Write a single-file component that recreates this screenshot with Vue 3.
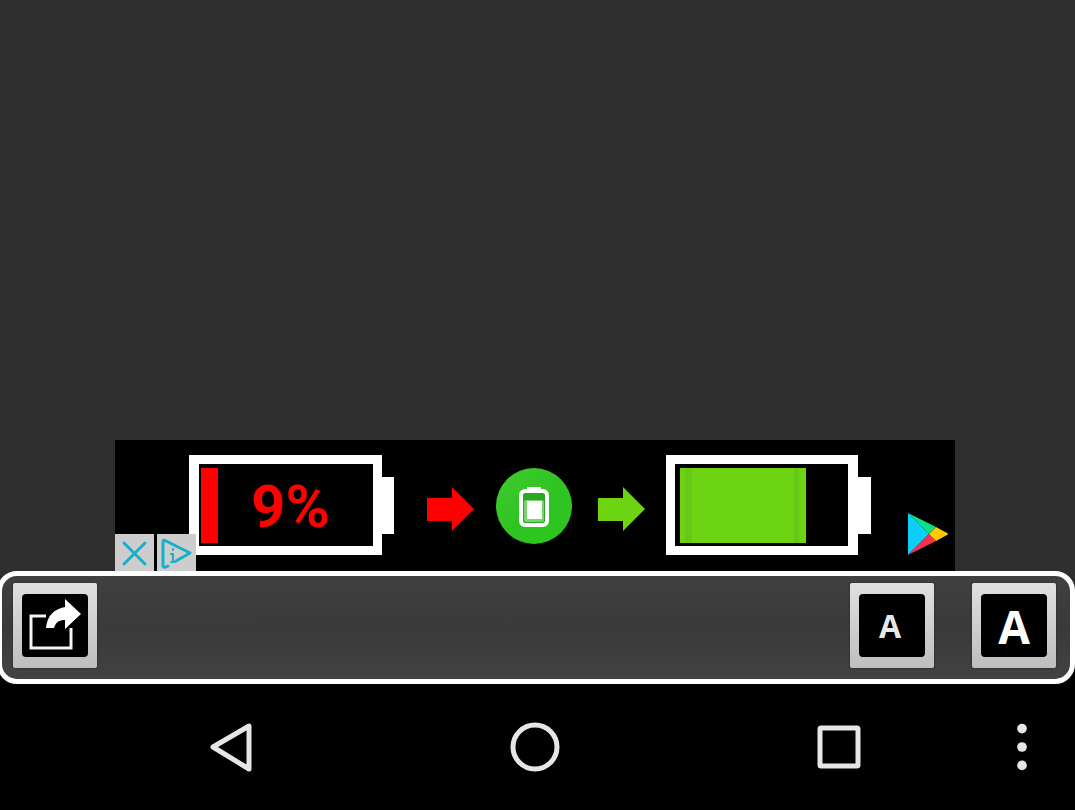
<script setup>
const share = () => {
  if (navigator.share) navigator.share({ title: document.title })
}
</script>

<template>
  <div class="screen">
    <main class="content">
      <section class="ad" aria-label="Advertisement">
        <a class="ad-link" href="#" aria-label="Battery saver on Google Play">
          <svg class="ad-art" viewBox="0 0 840 131">
            <defs>
              <linearGradient id="disc" x1="0" y1="0" x2="1" y2="1">
                <stop offset="0" stop-color="#41cd33" />
                <stop offset="0.5" stop-color="#2fc322" />
                <stop offset="1" stop-color="#2cc81e" />
              </linearGradient>
            </defs>
            <path fill="#fff" fill-rule="evenodd" d="M74 15H267V37H279V94H267V115H74ZM84 24V106H258V24Z" />
            <rect x="86" y="28" width="17" height="75" fill="#fe0000" />
            <text x="136" y="87" class="charge">9%</text>
            <path fill="#fe0000" d="M312 58H337V47L359 69L337 91V81H312Z" />
            <circle cx="419" cy="66" r="38" fill="url(#disc)" />
            <rect x="412" y="47" width="14" height="5" rx="1" fill="#fff" />
            <rect x="406" y="51" width="26" height="34" rx="4" fill="#2aa822" stroke="#fff" stroke-width="4" />
            <rect x="409" y="60" width="20" height="22" rx="2" fill="#78d36f" />
            <rect x="412" y="61" width="15" height="18" fill="#fff" />
            <path fill="#6dd414" d="M483 58H508V47L530 69L508 91V81H483Z" />
            <path fill="#fff" fill-rule="evenodd" d="M551 15H743V37H756V94H743V115H551ZM560 24V106H733V24Z" />
            <rect x="565" y="28" width="126" height="75" fill="#6dd414" />
            <path fill="#66c916" d="M570 28H577V103H570ZM679 28H684V103H679Z" />
            <path fill="#0ccdfb" d="M793 73L814 94L793 115Z" />
            <path fill="#0be184" d="M793 73L821 87L814 94Z" />
            <path fill="#f5334a" d="M793 115L821 101L814 94Z" />
            <path fill="#ffc900" d="M814 94L821 87L832 93Q834 94 832 95L821 101Z" />
          </svg>
        </a>
        <div class="ad-controls">
          <button type="button" class="ad-button" aria-label="Close ad">
            <svg viewBox="0 0 39 37">
              <path d="M9 9L30 30M30 9L9 30" />
            </svg>
          </button>
          <button type="button" class="ad-button" aria-label="Ad choices">
            <svg viewBox="0 0 39 37">
              <path d="M11 32Q6 35 6 31V8Q6 5 9 7L33 19L19 27" />
              <path class="info" d="M14 20H16V28M14 28H18M16 15V16" />
            </svg>
          </button>
        </div>
      </section>
    </main>

    <div class="toolbar-area">
      <div class="toolbar" role="toolbar" aria-label="Page tools">
        <button type="button" class="tool" aria-label="Share" @click="share">
          <span class="face">
            <svg viewBox="0 0 66 63">
              <path d="M24 22H9V54H49V34" fill="none" stroke="#f4f4f4" stroke-width="3" />
              <path d="M24 34C25 22 32 15 43 13V5L59 20L43 35V26C37 26 34 28 32 34Z" fill="#fff" />
            </svg>
          </span>
        </button>
        <div class="sizes">
          <button type="button" class="tool" aria-label="Smaller text"><span class="face small">A</span></button>
          <button type="button" class="tool" aria-label="Larger text"><span class="face large">A</span></button>
        </div>
      </div>
    </div>

    <nav class="system" aria-label="System navigation">
      <span></span>
      <button type="button" class="key" aria-label="Back">
        <svg viewBox="0 0 64 64"><path d="M50 11V54L14 32Z" /></svg>
      </button>
      <button type="button" class="key" aria-label="Home">
        <svg viewBox="0 0 64 64"><circle cx="32" cy="32" r="22" /></svg>
      </button>
      <button type="button" class="key" aria-label="Recent apps">
        <svg viewBox="0 0 64 64"><rect x="13" y="13" width="38" height="38" rx="1" /></svg>
      </button>
      <button type="button" class="key more" aria-label="More options">
        <svg class="dots" viewBox="0 0 64 64">
          <circle cx="32" cy="13" r="5" />
          <circle cx="32" cy="32" r="5" />
          <circle cx="32" cy="51" r="5" />
        </svg>
      </button>
    </nav>
  </div>
</template>

<style>
body {
  background: #000;
}
</style>

<style scoped>
.screen {
  display: flex;
  flex-direction: column;
  min-height: 100vh;
  font-family: "Open Sans", "Noto Sans", sans-serif;
}
button {
  border: 0;
  padding: 0;
  margin: 0;
  background: none;
  font: inherit;
  cursor: pointer;
}
svg {
  display: block;
}
.content {
  flex: 1;
  display: flex;
  align-items: flex-end;
  justify-content: center;
  padding-right: 5px;
  background: #2e2e2e;
}
.ad {
  position: relative;
  width: 100%;
  max-width: 840px;
  background: #000;
}
.ad-link {
  display: block;
}
.ad-art {
  width: 100%;
}
.charge {
  fill: #fe0000;
  font: 700 60px Roboto, sans-serif;
}
.ad-controls {
  position: absolute;
  left: 0;
  bottom: 0;
  display: flex;
  gap: 3px;
}
.ad-button {
  width: 39px;
  height: 37px;
  background: #cdcdce;
}
.ad-button svg {
  width: 39px;
  height: 37px;
  fill: none;
  stroke: #16b0cc;
  stroke-width: 3;
  stroke-linecap: round;
  stroke-linejoin: round;
}
.ad-button .info {
  stroke-width: 2;
}
.toolbar-area {
  background: linear-gradient(#2e2e2e 50%, #000 50%);
  overflow: hidden;
}
.toolbar {
  display: flex;
  justify-content: space-between;
  align-items: center;
  margin-left: -3px;
  padding: 7px 14px 11px 11px;
  border: 5px solid #fff;
  border-radius: 20px;
  background: linear-gradient(#404040, #3a3a3a 50%, #424242);
}
.sizes {
  display: flex;
  gap: 38px;
}
.tool {
  padding: 11px 9px;
  border-radius: 2px;
  background: linear-gradient(#e0e0e0, #bebebe);
  box-shadow: 0 0 2px #222;
}
.face {
  display: flex;
  align-items: center;
  justify-content: center;
  width: 66px;
  height: 63px;
  border-radius: 4px;
  background: #000;
  color: #fff;
  font-weight: 700;
}
.small {
  padding-right: 4px;
  box-sizing: border-box;
  font-size: 32px;
  color: #e8e8e8;
}
.large {
  font-size: 46px;
}
.system {
  display: grid;
  grid-template-columns: 79fr 304fr 304fr 304fr 84fr;
  align-items: center;
  height: 126px;
  background: #000;
}
.key {
  display: flex;
  justify-content: center;
}
.key svg {
  width: 64px;
  height: 64px;
  fill: none;
  stroke: #e6e6e6;
  stroke-width: 5;
  stroke-linejoin: round;
}
.more {
  width: 62px;
}
.key .dots {
  fill: #e6e6e6;
  stroke: none;
}
</style>
